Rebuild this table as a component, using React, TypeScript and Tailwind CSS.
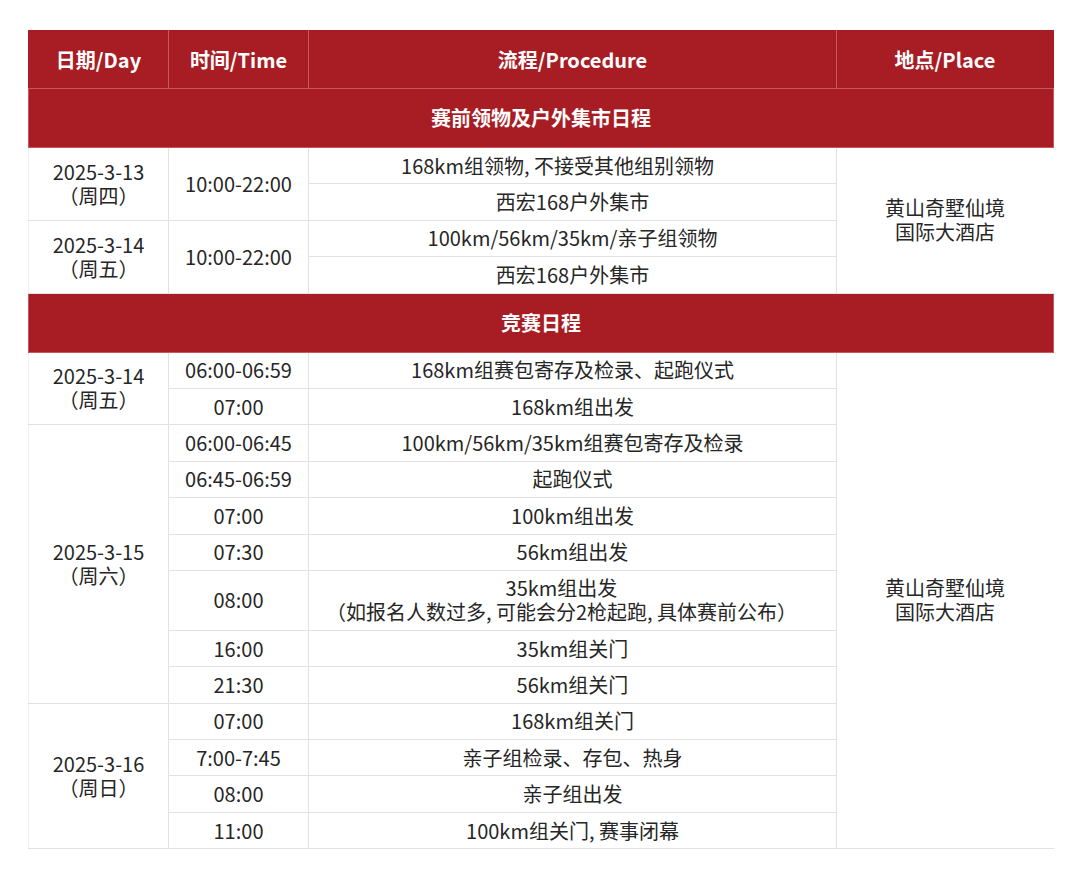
const FONT = '"Noto Sans CJK SC", "Noto Sans", sans-serif';

type Row = {
  date?: { text: string; week: string; span: number };
  time?: { text: string; span: number };
  proc: string[];
  place?: { span: number };
  tall?: boolean;
  // some source rows sit a bit left of centre (trailing spaces in the original)
  nudge?: string;
};

const presale: Row[] = [
  {
    date: { text: "2025-3-13", week: "（周四）", span: 2 },
    time: { text: "10:00-22:00", span: 2 },
    proc: ["168km组领物, 不接受其他组别领物"],
    place: { span: 4 },
    nudge: "pr-[30px]",
  },
  { proc: ["西宏168户外集市"] },
  {
    date: { text: "2025-3-14", week: "（周五）", span: 2 },
    time: { text: "10:00-22:00", span: 2 },
    proc: ["100km/56km/35km/亲子组领物"],
  },
  { proc: ["西宏168户外集市"] },
];

const race: Row[] = [
  {
    date: { text: "2025-3-14", week: "（周五）", span: 2 },
    time: { text: "06:00-06:59", span: 1 },
    proc: ["168km组赛包寄存及检录、起跑仪式"],
    place: { span: 13 },
  },
  { time: { text: "07:00", span: 1 }, proc: ["168km组出发"] },
  {
    date: { text: "2025-3-15", week: "（周六）", span: 7 },
    time: { text: "06:00-06:45", span: 1 },
    proc: ["100km/56km/35km组赛包寄存及检录"],
  },
  { time: { text: "06:45-06:59", span: 1 }, proc: ["起跑仪式"] },
  { time: { text: "07:00", span: 1 }, proc: ["100km组出发"] },
  { time: { text: "07:30", span: 1 }, proc: ["56km组出发"] },
  {
    time: { text: "08:00", span: 1 },
    proc: ["35km组出发", "（如报名人数过多, 可能会分2枪起跑, 具体赛前公布）"],
    tall: true,
    nudge: "pr-[22px]",
  },
  { time: { text: "16:00", span: 1 }, proc: ["35km组关门"] },
  { time: { text: "21:30", span: 1 }, proc: ["56km组关门"] },
  {
    date: { text: "2025-3-16", week: "（周日）", span: 4 },
    time: { text: "07:00", span: 1 },
    proc: ["168km组关门"],
  },
  { time: { text: "7:00-7:45", span: 1 }, proc: ["亲子组检录、存包、热身"] },
  { time: { text: "08:00", span: 1 }, proc: ["亲子组出发"] },
  { time: { text: "11:00", span: 1 }, proc: ["100km组关门, 赛事闭幕"] },
];

const cell = "border border-[#e2e2e2] p-0 text-center align-middle leading-[24px]";

function SectionRow({ title }: { title: string }) {
  return (
    <tr className="h-[59px]">
      <td
        colSpan={4}
        className="border border-[#c9575b] bg-[#a81d23] p-0 text-center align-middle font-bold text-white"
      >
        {title}
      </td>
    </tr>
  );
}

function BodyRows({ rows }: { rows: Row[] }) {
  return (
    <>
      {rows.map((r, i) => (
        <tr key={i} className={r.tall ? "h-[60px]" : "h-[36.4px]"}>
          {r.date ? (
            <td rowSpan={r.date.span} className={cell + " border-l-[#f1f1f1]"}>
              <div>{r.date.text}</div>
              <div>{r.date.week}</div>
            </td>
          ) : null}
          {r.time ? (
            <td rowSpan={r.time.span} className={cell}>
              {r.time.text}
            </td>
          ) : null}
          <td className={cell + " whitespace-nowrap " + (r.nudge ?? "")}>
            {r.proc.map((p, j) => (
              <div key={j}>{p}</div>
            ))}
          </td>
          {r.place ? (
            <td rowSpan={r.place.span} className={cell + " border-r-transparent"}>
              <div>黄山奇墅仙境</div>
              <div>国际大酒店</div>
            </td>
          ) : null}
        </tr>
      ))}
    </>
  );
}

export default function App() {
  return (
    <div
      className="h-[878px] w-[1080px] bg-white pt-[30px] pl-[28px] text-[20px] text-[#262626]"
      style={{ fontFamily: FONT }}
    >
      <table className="w-[1025px] table-fixed border-collapse border-b border-b-[#ececec]">
        <colgroup>
          <col className="w-[140px]" />
          <col className="w-[140px]" />
          <col className="w-[528px]" />
          <col className="w-[217px]" />
        </colgroup>
        <thead>
          <tr className="h-[58px] bg-[#a81d23] text-white">
            {["日期/Day", "时间/Time", "流程/Procedure", "地点/Place"].map((h) => (
              <th
                key={h}
                className="border border-[#c9575b] border-t-[#a81d23] p-0 text-center align-middle font-bold first:border-l-[#a81d23] last:border-r-[#a81d23]"
              >
                {h}
              </th>
            ))}
          </tr>
        </thead>
        <tbody>
          <SectionRow title="赛前领物及户外集市日程" />
          <BodyRows rows={presale} />
          <SectionRow title="竞赛日程" />
          <BodyRows rows={race} />
        </tbody>
      </table>
    </div>
  );
}
